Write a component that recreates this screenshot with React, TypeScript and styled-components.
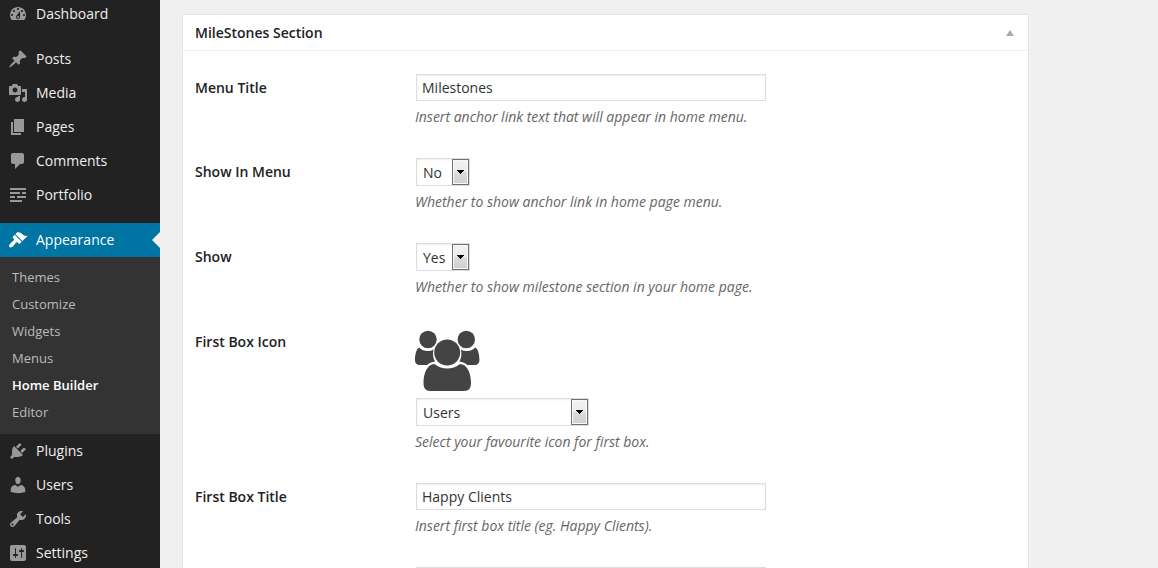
import React from "react";
import styled, { createGlobalStyle, css } from "styled-components";

const Global = createGlobalStyle`
  * { box-sizing: border-box; }
  html, body { margin: 0; height: 100%; overflow: hidden; }
  body {
    background: #f0f0f0;
    color: #444;
    font: 14px/19px "Open Sans", "Noto Sans", sans-serif;
  }
`;

const Page = styled.div`
  display: flex;
  height: 568px;
  overflow: hidden;
`;

const Sidebar = styled.nav`
  flex: none;
  width: 160px;
  height: 568px;
  overflow: hidden;
  background: #222;
`;

const MenuList = styled.div`
  display: flex;
  flex-direction: column;
  margin-top: -3px;
`;

const MenuItem = styled.a<{ $active?: boolean }>`
  position: relative;
  display: flex;
  align-items: center;
  flex: none;
  height: 34px;
  padding-left: 8px;
  gap: 8px;
  color: ${(p) => (p.$active ? "#fff" : "#eee")};
  background: ${(p) => (p.$active ? "#0074a2" : "transparent")};
  font-size: 14px;
  line-height: 18px;
  svg {
    flex: none;
    fill: ${(p) => (p.$active ? "#fff" : "#999")};
  }
  ${(p) =>
    p.$active &&
    css`
      &::after {
        content: "";
        position: absolute;
        right: 0;
        top: 9px;
        border: 8px solid transparent;
        border-left-width: 0;
        border-right-color: #f0f0f0;
      }
    `}
`;

const Separator = styled.div`
  flex: none;
  height: 11px;
`;

const Submenu = styled.div`
  display: flex;
  flex-direction: column;
  flex: none;
  padding: 7px 0 8px;
  background: #333;
`;

const SubmenuItem = styled.a<{ $current?: boolean }>`
  height: 27px;
  padding-left: 12px;
  font-size: 13px;
  line-height: 27px;
  color: ${(p) => (p.$current ? "#fff" : "#bbb")};
  font-weight: ${(p) => (p.$current ? 600 : 400)};
`;

const Content = styled.main`
  flex: 1;
  padding: 14px 0 0 22px;
`;

const Panel = styled.section`
  width: 847px;
  height: 620px;
  background: #fff;
  border: 1px solid #e5e5e5;
`;

const PanelHeader = styled.header`
  display: flex;
  align-items: center;
  justify-content: space-between;
  height: 36px;
  padding: 0 14px 0 12px;
  border-bottom: 1px solid #eee;
`;

const PanelTitle = styled.h3`
  margin: 0;
  font-size: 14px;
  line-height: 20px;
  font-weight: 600;
  color: #222;
`;

const Fields = styled.div`
  display: flex;
  flex-direction: column;
  padding: 23px 12px 0;
`;

const Field = styled.div<{ $height: number }>`
  display: flex;
  flex: none;
  height: ${(p) => p.$height}px;
`;

const Label = styled.label`
  width: 221px;
  padding-top: 4px;
  font-weight: 600;
  color: #222;
`;

const Control = styled.div`
  display: flex;
  flex-direction: column;
  align-items: flex-start;
`;

const TextInput = styled.input`
  width: 350px;
  height: 27px;
  padding: 3px 5px;
  border: 1px solid #ddd;
  box-shadow: inset 0 1px 2px rgba(0, 0, 0, 0.07);
  background: #fff;
  color: #333;
  font: inherit;
  outline: none;
`;

const SelectBox = styled.div<{ $width: number }>`
  display: flex;
  justify-content: space-between;
  width: ${(p) => p.$width}px;
  height: 28px;
  padding-left: 6px;
  border: 1px solid #ddd;
  box-shadow: inset 0 1px 2px rgba(0, 0, 0, 0.07);
  background: #fff;
  color: #333;
  line-height: 28px;
`;

const SelectButton = styled.span`
  display: flex;
  align-items: center;
  justify-content: center;
  width: 17px;
  height: 26px;
  border: 1px solid #707070;
  box-shadow: inset 0 0 0 1px #f8f8f8;
  background: linear-gradient(#f2f2f2, #ebebeb 50%, #dcdcdc 50%, #cfcfcf);
`;

const Hint = styled.p`
  margin: 6px 0 0 -1px;
  font-style: italic;
  color: #666;
`;

const PreviewIcon = styled.svg`
  margin: -1px 0 7px -1px;
  fill: #444;
`;

const paths = {
  dashboard:
    "M3.76 16h12.48c1.1-1.37 1.76-3.11 1.76-5 0-4.42-3.58-8-8-8s-8 3.58-8 8c0 1.89.66 3.63 1.76 5zM10 4c.55 0 1 .45 1 1s-.45 1-1 1-1-.45-1-1 .45-1 1-1zM6 6c.55 0 1 .45 1 1s-.45 1-1 1-1-.45-1-1 .45-1 1-1zm8 0c.55 0 1 .45 1 1s-.45 1-1 1-1-.45-1-1 .45-1 1-1zm-5.37 5.55L12 7v6c0 1.1-.9 2-2 2s-2-.9-2-2c0-.57.24-1.08.63-1.45zM4 10c.55 0 1 .45 1 1s-.45 1-1 1-1-.45-1-1 .45-1 1-1zm12 0c.55 0 1 .45 1 1s-.45 1-1 1-1-.45-1-1 .45-1 1-1zm-5 3c0-.55-.45-1-1-1s-1 .45-1 1 .45 1 1 1 1-.45 1-1z",
  post: "M10.44 3.02l1.82-1.82 6.36 6.35-1.83 1.82c-1.05-.68-2.48-.57-3.41.36l-.75.75c-.92.93-1.04 2.35-.35 3.41l-1.83 1.82-2.41-2.41-2.8 2.79c-.42.42-3.38 2.71-3.8 2.29s1.86-3.39 2.28-3.81l2.79-2.79L4.1 9.36l1.83-1.82c1.05.69 2.48.57 3.4-.36l.75-.75c.93-.92 1.05-2.35.36-3.41z",
  media:
    "M13 11V4c0-.55-.45-1-1-1h-1.67L9 1H5L3.67 3H2c-.55 0-1 .45-1 1v7c0 .55.45 1 1 1h10c.55 0 1-.45 1-1zM7 4.5c1.38 0 2.5 1.12 2.5 2.5S8.38 9.5 7 9.5 4.5 8.38 4.5 7 5.62 4.5 7 4.5zM14 6h5v10.5c0 1.38-1.12 2.5-2.5 2.5S14 17.88 14 16.5s1.12-2.5 2.5-2.5c.17 0 .34.02.5.05V9h-3V6zm-4 8.05V13h2v3.500c0 1.38-1.12 2.5-2.5 2.5S7 17.88 7 16.5 8.12 14 9.5 14c.17 0 .34.02.5.05z",
  page: "M6 15V2h10v13H6zm-1 1h8v2H3V5h2v11z",
  comment:
    "M5 2h9c1.1 0 2 .9 2 2v7c0 1.1-.9 2-2 2h-2l-5 5v-5H5c-1.1 0-2-.9-2-2V4c0-1.1.9-2 2-2z",
  portfolio:
    "M2 3h16v2H2zM2 7h10v2H2zM14 7h4v2h-4zM2 11h5v2H2zM9 11h9v2H9zM2 15h12v2H2z",
  appearance:
    "M14.48 11.06L7.41 3.99l1.5-1.5c.5-.56 2.3-.47 3.51.32 1.21.8 1.43 1.28 2.91 2.1 1.18.64 2.45 1.26 4.45.85zm-.71.71L6.7 4.7 4.93 6.47c-.39.39-.39 1.02 0 1.41l1.06 1.06c.39.39.39 1.03 0 1.42-.6.6-1.43 1.11-2.21 1.69-.35.26-.7.53-1.01.84C1.43 14.23.4 16.08 1.4 17.07c.99 1 2.84-.03 4.18-1.36.31-.31.58-.66.85-1.02.57-.78 1.08-1.61 1.69-2.21.39-.39 1.02-.39 1.41 0l1.06 1.06c.39.39 1.02.39 1.41 0z",
  plugins:
    "M13.11 4.36L9.87 7.6 8 5.73l3.24-3.24c.35-.34 1.05-.2 1.56.32.52.51.66 1.21.31 1.55zm-8 1.77l.91-1.12 9.01 9.01-1.19.84c-.71.71-2.63 1.16-3.82 1.16H6.14L4.9 17.26c-.59.59-1.54.59-2.12 0-.59-.58-.59-1.53 0-2.12l1.24-1.24v-3.88c0-1.13.4-3.19 1.09-3.89zm7.26 3.97l3.24-3.24c.34-.35 1.04-.21 1.55.31.52.51.66 1.21.31 1.55l-3.24 3.25z",
  users:
    "M10 9.25c-2.27 0-2.73-3.44-2.73-3.44C7 4.02 7.82 2 9.97 2c2.16 0 2.98 2.02 2.71 3.81 0 0-.41 3.44-2.68 3.44zm0 2.57L12.72 10c2.39 0 4.52 2.33 4.52 4.53v2.49s-3.65 1.13-7.24 1.13c-3.65 0-7.24-1.13-7.24-1.13v-2.49c0-2.25 1.94-4.48 4.47-4.48z",
  tools:
    "M16.68 9.77c-1.34 1.34-3.3 1.67-4.95.99l-5.41 6.52c-.99.99-2.59.99-3.58 0s-.99-2.59 0-3.57l6.52-5.42c-.68-1.65-.35-3.61.99-4.95 1.28-1.28 3.12-1.62 4.72-1.06l-2.89 2.89 2.82 2.82 2.86-2.87c.53 1.58.18 3.39-1.08 4.65zM3.81 16.21c.4.39 1.04.39 1.43 0 .4-.4.4-1.04 0-1.43-.39-.4-1.03-.4-1.43 0-.39.39-.39 1.03 0 1.43z",
  settings:
    "M18 16V4c0-1.1-.9-2-2-2H4c-1.1 0-2 .9-2 2v12c0 1.1.9 2 2 2h12c1.1 0 2-.9 2-2zM8 11h1c.55 0 1 .45 1 1s-.45 1-1 1H8v1.5c0 .28-.22.5-.5.5s-.5-.22-.5-.5V13H6c-.55 0-1-.45-1-1s.45-1 1-1h1V5.5c0-.28.22-.5.5-.5s.5.22.5.5V11zm5-2h-1c-.55 0-1-.45-1-1s.45-1 1-1h1V5.5c0-.28.22-.5.5-.5s.5.22.5.5V7h1c.55 0 1 .45 1 1s-.45 1-1 1h-1v5.5c0 .28-.22.5-.5.5s-.5-.22-.5-.5V9z",
};

type IconName = keyof typeof paths;

const Item = ({ icon, label, active }: { icon: IconName; label: string; active?: boolean }) => (
  <MenuItem $active={active}>
    <svg width="20" height="20" viewBox="0 0 20 20">
      <path d={paths[icon]} fillRule="evenodd" />
    </svg>
    {label}
  </MenuItem>
);

const Select = ({ value, width }: { value: string; width: number }) => (
  <SelectBox $width={width}>
    {value}
    <SelectButton>
      <svg width="7" height="4" viewBox="0 0 7 4" shapeRendering="crispEdges">
        <path d="M0 0h7v1H6v1H5v1H4v1H3V3H2V2H1V1H0z" fill="#000" />
      </svg>
    </SelectButton>
  </SelectBox>
);

const submenu = ["Themes", "Customize", "Widgets", "Menus", "Home Builder", "Editor"];

export default function App() {
  return (
    <>
      <Global />
      <Page>
        <Sidebar>
          <MenuList>
            <Item icon="dashboard" label="Dashboard" />
            <Separator />
            <Item icon="post" label="Posts" />
            <Item icon="media" label="Media" />
            <Item icon="page" label="Pages" />
            <Item icon="comment" label="Comments" />
            <Item icon="portfolio" label="Portfolio" />
            <Separator />
            <Item icon="appearance" label="Appearance" active />
            <Submenu>
              {submenu.map((name) => (
                <SubmenuItem key={name} $current={name === "Home Builder"}>
                  {name}
                </SubmenuItem>
              ))}
            </Submenu>
            <Item icon="plugins" label="Plugins" />
            <Item icon="users" label="Users" />
            <Item icon="tools" label="Tools" />
            <Item icon="settings" label="Settings" />
          </MenuList>
        </Sidebar>
        <Content>
          <Panel>
            <PanelHeader>
              <PanelTitle>MileStones Section</PanelTitle>
              <svg width="8" height="6" viewBox="0 0 8 6">
                <path d="M4 0l4 6H0z" fill="#aaa" />
              </svg>
            </PanelHeader>
            <Fields>
              <Field $height={84}>
                <Label>Menu Title</Label>
                <Control>
                  <TextInput defaultValue="Milestones" />
                  <Hint>Insert anchor link text that will appear in home menu.</Hint>
                </Control>
              </Field>
              <Field $height={85}>
                <Label>Show In Menu</Label>
                <Control>
                  <Select value="No" width={54} />
                  <Hint>Whether to show anchor link in home page menu.</Hint>
                </Control>
              </Field>
              <Field $height={85}>
                <Label>Show</Label>
                <Control>
                  <Select value="Yes" width={54} />
                  <Hint>Whether to show milestone section in your home page.</Hint>
                </Control>
              </Field>
              <Field $height={155}>
                <Label>First Box Icon</Label>
                <Control>
                  <PreviewIcon width="65" height="64" viewBox="0 0 65 64">
                    <circle cx="13" cy="12.5" r="8.7" />
                    <circle cx="51.3" cy="12.5" r="8.7" />
                    <circle cx="32.2" cy="25.5" r="13" />
                    <path d="M4 20.500C8 24.500 14 25 18.500 22.500C17.500 27 18 31 20 34.500C16.500 35 14 36 12 38H5C2 38 0 36.500 0 33C0 28 1 22.500 4 20.500z" />
                    <path d="M60.400 20.500C56.400 24.500 50.400 25 45.900 22.500C46.900 27 46.400 31 44.400 34.500C47.900 35 50.400 36 52.400 38H59.400C62.400 38 64.400 36.500 64.400 33C64.400 28 63.400 22.500 60.400 20.500z" />
                    <path d="M19.500 37C27 43 37.500 43 45 37C52 37 56 46 56 56C56 61 54 64 49 64H15.500C10.500 64 8.500 61 8.500 56C8.500 46 12.500 37 19.500 37z" />
                  </PreviewIcon>
                  <Select value="Users" width={173} />
                  <Hint>Select your favourite icon for first box.</Hint>
                </Control>
              </Field>
              <Field $height={84}>
                <Label>First Box Title</Label>
                <Control>
                  <TextInput defaultValue="Happy Clients" />
                  <Hint>Insert first box title (eg. Happy Clients).</Hint>
                </Control>
              </Field>
              <Field $height={84}>
                <Label />
                <Control>
                  <TextInput />
                </Control>
              </Field>
            </Fields>
          </Panel>
        </Content>
      </Page>
    </>
  );
}
